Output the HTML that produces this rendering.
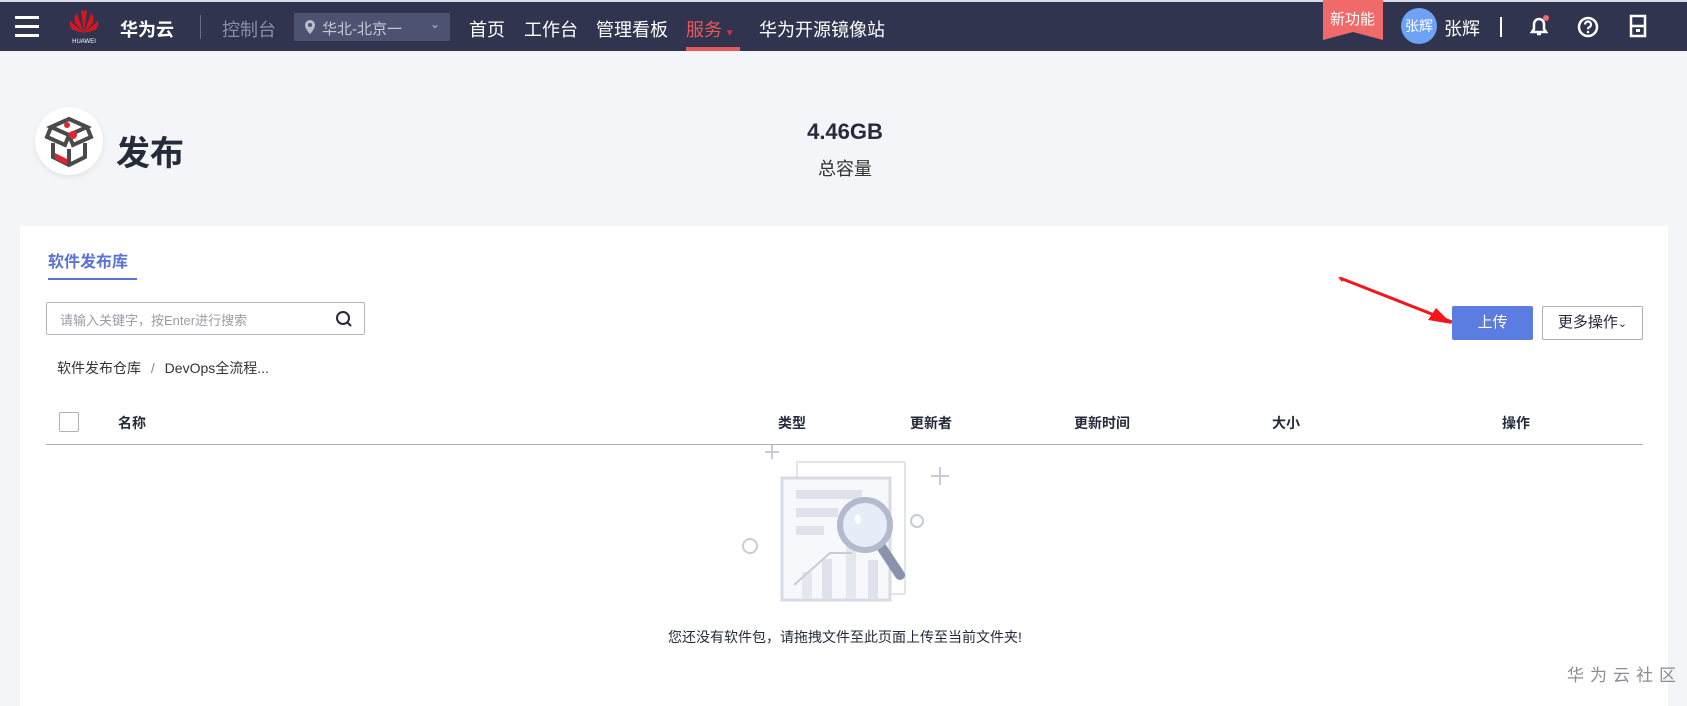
<!DOCTYPE html>
<html><head><meta charset="utf-8"><style>
*{margin:0;padding:0;box-sizing:border-box}
body{width:1687px;height:697px;overflow:hidden;background:#f3f5f8;font-family:"Liberation Sans","Noto Sans CJK SC",sans-serif;position:relative;color:#252b3a}
.a{position:absolute;white-space:nowrap}
.nav{position:absolute;left:0;top:0;width:1687px;height:51px;background:#30344f;border-top:2px solid #d8dbe3}
.ni{position:absolute;top:14px;font-size:18px;color:#fff}
.th{position:absolute;top:413px;font-size:14px;font-weight:bold;color:#252b3a}
</style></head><body>
<div class="nav">
 <div class="a" style="left:15px;top:14px;width:24px;height:3px;background:#fff"></div>
 <div class="a" style="left:15px;top:23px;width:24px;height:3px;background:#fff"></div>
 <div class="a" style="left:15px;top:32px;width:24px;height:3px;background:#fff"></div>
 <svg class="a" style="left:66px;top:7px" width="36" height="36" viewBox="0 0 36 36"><g fill="#d6161f"><path d="M18 24 L11 4 Q7 8 9 14Z"/><path d="M18 24 L25 4 Q29 8 27 14Z"/><path d="M18 24 L15 2 Q18 1 21 2Z"/><path d="M18 24 L4 12 Q3 18 7 21Z"/><path d="M18 24 L32 12 Q33 18 29 21Z"/></g><text x="18" y="34" font-size="6" fill="#fff" text-anchor="middle" font-family="Liberation Sans">HUAWEI</text></svg>
 <div class="ni" style="left:120px;font-weight:bold">华为云</div>
 <div class="a" style="left:200px;top:13px;width:1px;height:24px;background:#6b6f85"></div>
 <div class="ni" style="left:222px;color:#8a8ea3">控制台</div>
 <div class="a" style="left:294px;top:11px;width:156px;height:28px;background:#4d5270"></div>
 <svg class="a" style="left:304px;top:17px" width="12" height="16" viewBox="0 0 12 16"><path d="M6 1a5 5 0 0 0-5 5c0 4 5 9 5 9s5-5 5-9a5 5 0 0 0-5-5z" fill="#b8bccb"/><circle cx="6" cy="6" r="2" fill="#4d5270"/></svg>
 <div class="a" style="left:322px;top:16px;font-size:15px;color:#c6c9d6">华北-北京一</div>
 <div class="a" style="left:430px;top:15px;font-size:12px;color:#b8bccb">&#8964;</div>
 <div class="ni" style="left:469px">首页</div>
 <div class="ni" style="left:524px">工作台</div>
 <div class="ni" style="left:596px">管理看板</div>
 <div class="ni" style="left:686px;color:#e8595e">服务<span style="font-size:10px;color:#e0303a"> ▼</span></div>
 <div class="a" style="left:686px;top:45px;width:54px;height:4px;background:#e8595e"></div>
 <div class="ni" style="left:759px">华为开源镜像站</div>
 <svg class="a" style="left:1323px;top:-2px" width="60" height="40"><path d="M0 0H60V40L30 32L0 40Z" fill="#f06a6a"/></svg>
 <div class="a" style="left:1330px;top:6px;font-size:15px;color:#fff">新功能</div>
 <div class="a" style="left:1401px;top:6px;width:36px;height:36px;border-radius:50%;background:#6ea2f5;color:#fff;font-size:14px;line-height:36px;text-align:center">张辉</div>
 <div class="ni" style="left:1444px;top:13px">张辉</div>
 <div class="a" style="left:1500px;top:15px;width:2px;height:20px;background:#fff"></div>
 <svg class="a" style="left:1527px;top:12px" width="24" height="24" viewBox="0 0 24 24"><path d="M5 18h14l-2-3V10a5 5 0 0 0-10 0v5z M10 20h4" fill="none" stroke="#fff" stroke-width="2.5"/><circle cx="19" cy="4" r="3" fill="#f06a6a"/></svg>
 <svg class="a" style="left:1576px;top:13px" width="24" height="24" viewBox="0 0 24 24"><circle cx="12" cy="12" r="9" fill="none" stroke="#fff" stroke-width="2.5"/><path d="M9 9.5a3 3 0 1 1 4 2.8c-1 .4-1 1-1 2" fill="none" stroke="#fff" stroke-width="2.2"/><circle cx="12" cy="17" r="1.3" fill="#fff"/></svg>
 <svg class="a" style="left:1629px;top:12px" width="18" height="24" viewBox="0 0 18 24"><rect x="2" y="2" width="14" height="20" fill="none" stroke="#fff" stroke-width="2.5"/><path d="M2 12h14" stroke="#fff" stroke-width="2.5"/><rect x="7" y="15" width="4" height="3" fill="#fff"/></svg>
</div>

<div class="a" style="left:35px;top:107px;width:68px;height:68px;border-radius:50%;background:#fff;box-shadow:0 2px 6px rgba(0,0,0,.08)"></div>
<svg class="a" style="left:43px;top:113px" width="52" height="56" viewBox="0 0 52 56"><g fill="none" stroke="#4a4a4a" stroke-width="4"><path d="M26 6L44 14 26 22 8 14Z"/><path d="M8 14L4 24 22 32 26 22"/><path d="M44 14L48 24 30 32 26 22"/><path d="M10 30V44L26 52 42 44V30"/><path d="M26 36V52"/></g><circle cx="24" cy="12" r="3" fill="#e0252e"/><circle cx="30" cy="22" r="4" fill="#e0252e"/><path d="M12 40L24 46V52L12 46Z" fill="#e0252e"/></svg>
<div class="a" style="left:116px;top:126px;font-size:34px;font-weight:bold;color:#252b3a">发布</div>
<div class="a" style="left:795px;top:119px;width:100px;text-align:center;font-size:22px;font-weight:bold">4.46GB</div>
<div class="a" style="left:795px;top:155px;width:100px;text-align:center;font-size:18px;color:#333">总容量</div>

<div class="a" style="left:20px;top:226px;width:1648px;height:480px;background:#fff"></div>
<div class="a" style="left:48px;top:248px;font-size:16px;font-weight:bold;color:#5a73d4">软件发布库</div>
<div class="a" style="left:48px;top:278px;width:89px;height:2px;background:#5a73d4"></div>
<div class="a" style="left:46px;top:302px;width:319px;height:33px;border:1px solid #b5b8c4;border-radius:2px"></div>
<div class="a" style="left:60px;top:310px;font-size:13px;color:#9a9da8">请输入关键字，按Enter进行搜索</div>
<svg class="a" style="left:335px;top:310px" width="18" height="18" viewBox="0 0 18 18"><circle cx="8" cy="8" r="6" fill="none" stroke="#252b3a" stroke-width="2"/><path d="M12.5 12.5L16 16" stroke="#252b3a" stroke-width="2"/></svg>
<div class="a" style="left:57px;top:358px;font-size:14px;color:#333">软件发布仓库 <span style="color:#888;margin:0 6px">/</span> DevOps全流程...</div>
<div class="a" style="left:59px;top:412px;width:20px;height:20px;border:1px solid #adb0b8;border-radius:2px"></div>
<div class="th" style="left:118px">名称</div>
<div class="th" style="left:778px">类型</div>
<div class="th" style="left:910px">更新者</div>
<div class="th" style="left:1074px">更新时间</div>
<div class="th" style="left:1272px">大小</div>
<div class="th" style="left:1502px">操作</div>
<div class="a" style="left:46px;top:444px;width:1597px;height:1px;background:#adb0b8"></div>

<svg class="a" style="left:740px;top:445px" width="215" height="160" viewBox="0 0 215 160"><g stroke="#c8ccd8" stroke-width="2" fill="none"><path d="M32 0v14M25 7h14"/><path d="M200 22v18M191 31h18"/><circle cx="10" cy="101" r="7"/><circle cx="177" cy="76" r="6"/></g><rect x="57" y="17" width="108" height="132" fill="#fff" stroke="#e2e5ec" stroke-width="2"/><rect x="42" y="33" width="108" height="122" fill="#f7f8fb" stroke="#d8dbe4" stroke-width="3"/><rect x="56" y="45" width="66" height="9" fill="#dfe2ea"/><rect x="56" y="63" width="42" height="9" fill="#dfe2ea"/><rect x="56" y="81" width="28" height="9" fill="#dfe2ea"/><rect x="62" y="127" width="10" height="27" fill="#e4e7ee"/><rect x="82" y="114" width="10" height="40" fill="#dfe2ea"/><rect x="106" y="100" width="10" height="54" fill="#e4e7ee"/><rect x="128" y="115" width="10" height="39" fill="#dfe2ea"/><path d="M54 140L90 108 112 108" stroke="#c8ccd8" stroke-width="2" fill="none"/><path d="M140 100L160 130" stroke="#8a93ab" stroke-width="10" stroke-linecap="round"/><circle cx="125" cy="80" r="25" fill="#e6edf8" stroke="#b4bacb" stroke-width="6"/><ellipse cx="118" cy="74" rx="3" ry="5" fill="#fff"/></svg>
<div class="a" style="left:620px;top:627px;width:450px;text-align:center;font-size:14px;color:#252b3a">您还没有软件包，请拖拽文件至此页面上传至当前文件夹!</div>
<div class="a" style="left:1567px;top:661px;font-size:17px;color:#8a8d95;letter-spacing:6px">华为云社区</div>

<svg class="a" style="left:1336px;top:274px" width="120" height="56"><path d="M4 4L116 48" stroke="#f5161b" stroke-width="3"/><path d="M116 50L92 46 100 34Z" fill="#f5161b"/><path d="M2 3L8 4 6 8Z" fill="#f5161b"/></svg>
<div class="a" style="left:1452px;top:306px;width:81px;height:34px;background:#5b7ce0;border-radius:2px;color:#fff;font-size:15px;line-height:34px;text-align:center">上传</div>
<div class="a" style="left:1542px;top:306px;width:101px;height:34px;border:1px solid #adb0b8;border-radius:2px;font-size:15px;line-height:32px;text-align:center;color:#252b3a">更多操作<span style="font-size:11px">⌄</span></div>
</body></html>
